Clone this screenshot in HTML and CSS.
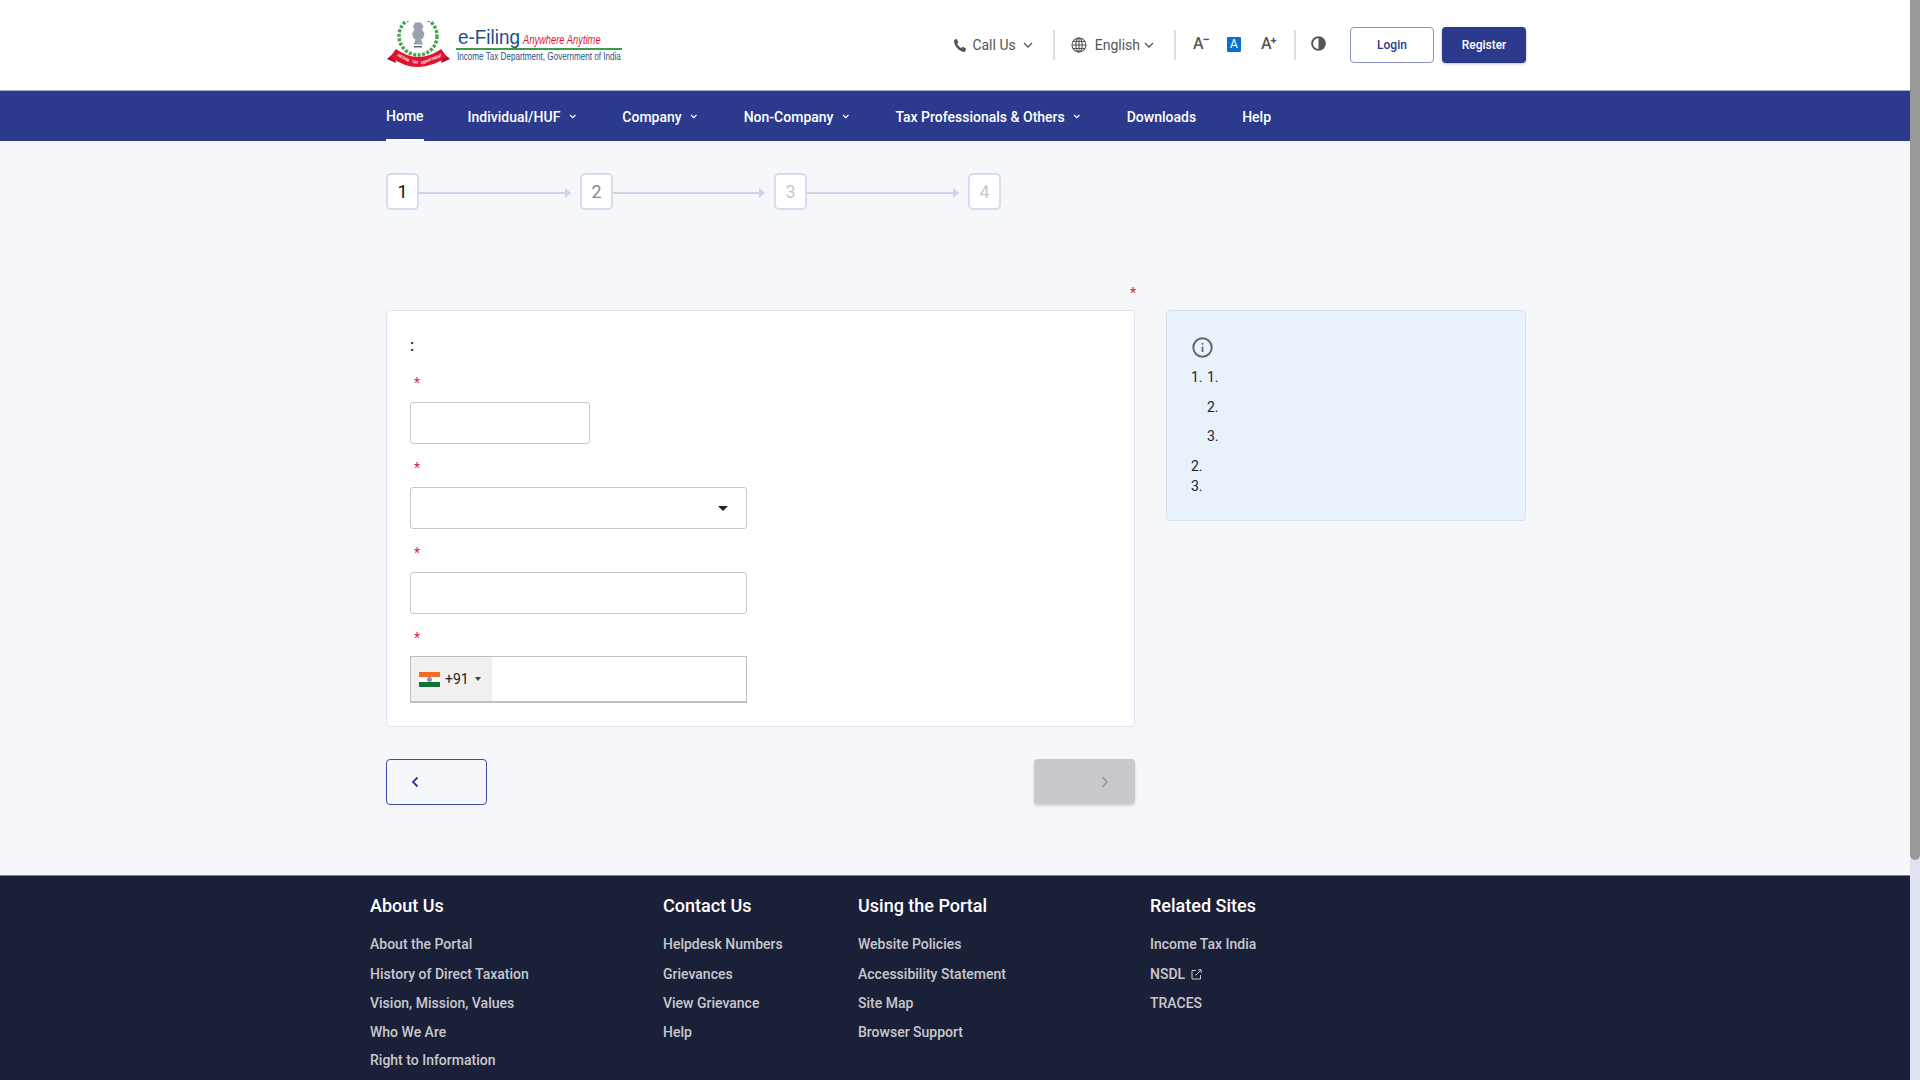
FILE: index.html

```html
<!DOCTYPE html>
<html lang="en">
  <head>
    <meta charset="UTF-8" />
    <meta name="viewport" content="width=device-width, initial-scale=1.0" />
    <title>e-Filing</title>
    <link rel="stylesheet" href="styles.css">
  </head>
  <body>
    <div class="page">
      <!-- Top header -->
      <header class="header">
        <div class="header-inner">
          <svg class="logo" width="238" height="50" viewBox="0 0 238 50">
            <circle cx="32" cy="15" r="19" fill="none" stroke="#4aa356" stroke-width="3.500" stroke-dasharray="3 1.500" />
            <circle cx="32" cy="15" r="17" fill="#fff" />
            <path d="M29 1.500h6l2.500 4-1.500 3 2.500 4-1.500 5-2 1 2 5H27.500l2-5-2-1-1.500-5 2.500-4-1.500-3z" fill="#9aa2af" />
            <path d="M28 25h8v1.500h-8z" fill="#666" />
            <path d="M1 38l7-6 2 10z" fill="#a80f20" />
            <path d="M64 38l-7-6-2 10z" fill="#a80f20" />
            <path d="M7 32Q32 50 58 32" fill="none" stroke="#e0142c" stroke-width="10" />
            <text class="logo-ribbon" transform="translate(17 38) rotate(28) scale(.8 1)" text-anchor="middle">INCOME</text>
            <text class="logo-ribbon" transform="translate(29 42.500) rotate(4) scale(.8 1)" text-anchor="middle">TAX</text>
            <text class="logo-ribbon" transform="translate(46 39.500) rotate(-22) scale(.8 1)" text-anchor="middle">DEPARTMENT</text>
            <text class="logo-title" transform="translate(72 23) scale(.9 1)">e-Filing</text>
            <text class="logo-tag" transform="translate(137 23) scale(.72 1)">Anywhere Anytime</text>
            <rect x="70" y="27" width="166" height="2" fill="#3f9a4a" />
            <text class="logo-sub" transform="translate(71 39) scale(.737 1)">Income Tax Department, Government of India</text>
          </svg>
          <div class="tools">
            <a class="tool tool-call">
              <svg width="16" height="16" viewBox="0 0 24 24"><path d="M6.600 2.500l3.200 5.200-2 2.400c1.300 3 3.400 5.200 6.200 6.400l2.400-2 5 3.300-1.500 3.600c-.4.800-1.200 1.100-2 1C9.800 21 3.500 14 3 6c0-.8.300-1.500 1-2z" fill="#555" /></svg>
              <span>Call Us</span>
              <svg class="chev" width="10" height="6" viewBox="0 0 10 6"><path d="M1 1l4 4 4-4" /></svg>
            </a>
            <i class="sep sep-one"></i>
            <a class="tool tool-lang">
              <svg width="16" height="16" viewBox="0 0 16 16" fill="none" stroke="#555" stroke-width="1.100"><circle cx="8" cy="8" r="7" /><ellipse cx="8" cy="8" rx="3.200" ry="7" /><path d="M8 1v14M1 8h14M2 4.500h12M2 11.500h12" /></svg>
              <span>English</span>
              <svg class="chev" width="10" height="6" viewBox="0 0 10 6"><path d="M1 1l4 4 4-4" /></svg>
            </a>
            <i class="sep sep-two"></i>
            <span class="font-btn">A<sup>&minus;</sup></span>
            <span class="font-box">A</span>
            <span class="font-btn font-plus">A<sup>+</sup></span>
            <i class="sep sep-three"></i>
            <svg class="contrast" width="15" height="15" viewBox="0 0 16 16"><circle cx="8" cy="8" r="6.800" fill="#fff" stroke="#555" stroke-width="2" /><path d="M8 1a7 7 0 0 1 0 14z" fill="#555" /></svg>
            <button class="btn-login">Login</button>
            <button class="btn-register">Register</button>
          </div>
        </div>
      </header>

      <!-- Main nav -->
      <nav class="nav">
        <div class="nav-inner">
          <a class="nav-item active">Home</a>
          <a class="nav-item">Individual/HUF <svg class="nav-chev" width="7.500" height="5" viewBox="0 0 7 5"><path d="M.8 1l2.700 2.700L6.200 1" /></svg></a>
          <a class="nav-item">Company <svg class="nav-chev" width="7.500" height="5" viewBox="0 0 7 5"><path d="M.8 1l2.700 2.700L6.200 1" /></svg></a>
          <a class="nav-item">Non-Company <svg class="nav-chev" width="7.500" height="5" viewBox="0 0 7 5"><path d="M.8 1l2.700 2.700L6.200 1" /></svg></a>
          <a class="nav-item">Tax Professionals &amp; Others <svg class="nav-chev" width="7.500" height="5" viewBox="0 0 7 5"><path d="M.8 1l2.700 2.700L6.200 1" /></svg></a>
          <a class="nav-item">Downloads</a>
          <a class="nav-item">Help</a>
        </div>
      </nav>

      <main class="main">
        <div class="container">
          <!-- Stepper -->
          <div class="steps">
            <div class="step step-current">1</div>
            <div class="step-line"></div>
            <div class="step step-next">2</div>
            <div class="step-line"></div>
            <div class="step">3</div>
            <div class="step-line"></div>
            <div class="step">4</div>
          </div>

          <div class="note-star"><span class="req">*</span></div>

          <div class="content">
            <div class="left">
              <form class="form-card">
                <p class="colon">:</p>
                <div class="field">
                  <label class="req">*</label>
                  <input type="text" class="input input-short" />
                </div>
                <div class="field">
                  <label class="req">*</label>
                  <div class="select-wrap">
                    <select class="input"></select>
                    <i class="select-caret"></i>
                  </div>
                </div>
                <div class="field">
                  <label class="req">*</label>
                  <input type="text" class="input" />
                </div>
                <div class="field field-phone">
                  <label class="req">*</label>
                  <div class="phone">
                    <div class="phone-code">
                      <span class="flag"><i></i></span>
                      <span>+91</span>
                      <i class="phone-caret"></i>
                    </div>
                  </div>
                </div>
              </form>
              <div class="actions">
                <button class="btn-back" type="button">
                  <svg width="8" height="12" viewBox="0 0 8 12"><path d="M6.500 1.500L2 6l4.500 4.500" /></svg>
                </button>
                <button class="btn-next" type="button" disabled>
                  <svg width="8" height="12" viewBox="0 0 8 12"><path d="M1.500 1L6 6l-4.500 5" /></svg>
                </button>
              </div>
            </div>

            <aside class="info-card">
              <svg class="info-icon" width="21" height="21" viewBox="0 0 21 21" fill="none"><circle cx="10.500" cy="10.500" r="9.200" stroke="#666" stroke-width="2" /><path d="M10.500 9.500v5.500M10.500 6v1.700" stroke="#666" stroke-width="1.700" /></svg>
              <ol class="info-list">
                <li>
                  <ol>
                    <li>&nbsp;</li>
                    <li>&nbsp;</li>
                    <li>&nbsp;</li>
                  </ol>
                </li>
                <li>&nbsp;</li>
                <li>&nbsp;</li>
              </ol>
            </aside>
          </div>
        </div>
      </main>

      <!-- Footer -->
      <footer class="footer">
        <div class="footer-inner">
          <div class="footer-col">
            <h4>About Us</h4>
            <a>About the Portal</a>
            <a>History of Direct Taxation</a>
            <a>Vision, Mission, Values</a>
            <a>Who We Are</a>
            <a>Right to Information</a>
          </div>
          <div class="footer-col">
            <h4>Contact Us</h4>
            <a>Helpdesk Numbers</a>
            <a>Grievances</a>
            <a>View Grievance</a>
            <a>Help</a>
          </div>
          <div class="footer-col">
            <h4>Using the Portal</h4>
            <a>Website Policies</a>
            <a>Accessibility Statement</a>
            <a>Site Map</a>
            <a>Browser Support</a>
          </div>
          <div class="footer-col">
            <h4>Related Sites</h4>
            <a>Income Tax India</a>
            <a>NSDL <svg class="ext" width="11" height="11" viewBox="0 0 11 11" fill="none" stroke="#c8c8cc"><path d="M5 1.500H1v8.500h8.500V6M4.500 6.500L10 1M7 .8h3.200V4" /></svg></a>
            <a>TRACES</a>
          </div>
        </div>
      </footer>
    </div>
    <div class="scrollbar"><div class="scrollbar-thumb"></div></div>
  </body>
</html>
```

FILE: styles.css

```css
html,
body {
  margin: 0;
  padding: 0;
  height: 100%;
  overflow: hidden;
}

body {
  display: flex;
  font-family: Roboto, Arial, sans-serif;
  font-size: 14px;
  color: #222;
  background-color: #f5f7fb;
}

.page {
  flex: 1;
  min-width: 0;
  height: 100vh;
  overflow: hidden;
}

/* Page scrollbar */
.scrollbar {
  width: 10px;
  background-color: #dfe2f2;
}

.scrollbar-thumb {
  height: 860px;
  background-color: #999;
  border-radius: 0 0 5px 5px;
}

/* Header styling */
.header {
  height: 90px;
  background-color: #fff;
  border-bottom: 1px solid #a9afd0;
}

.header-inner {
  width: 1142px;
  height: 100%;
  margin: 0 auto;
  padding-left: 2px;
  box-sizing: border-box;
  display: flex;
  align-items: center;
  justify-content: space-between;
}

.logo {
  margin-top: 2px;
}

.logo text {
  font-family: "Liberation Sans", Arial, sans-serif;
}

.logo .logo-ribbon {
  font-size: 4px;
  font-weight: bold;
  fill: #fff;
}

.logo-title {
  font-size: 21px;
  fill: #1d4f86;
}

.logo-tag {
  font-size: 13px;
  font-style: italic;
  fill: #e3162f;
}

.logo-sub {
  font-size: 11px;
  fill: #27527f;
}

.tools {
  display: flex;
  align-items: center;
  color: #555;
}

.tool {
  display: flex;
  align-items: center;
}

.tool-call span {
  margin: 0 7px 0 4px;
}

.tool-lang span {
  margin: 0 4px 0 8px;
}

.chev {
  fill: none;
  stroke: #555;
  stroke-width: 1.3;
}

.sep {
  display: block;
  width: 2px;
  height: 30px;
  background-color: #ddd;
}

.sep-one {
  margin: 0 16px 0 20px;
}

.sep-two {
  margin: 0 17px 0 20px;
}

.sep-three {
  margin: 0 15px 0 17px;
}

.font-btn {
  width: 16px;
  margin-bottom: 2px;
  font-size: 16px;
  font-weight: 500;
  line-height: 20px;
  white-space: nowrap;
}

.font-btn sup {
  font-size: 13px;
  font-weight: 700;
  line-height: 0;
  vertical-align: 5px;
  margin-left: -1px;
}

.font-plus sup {
  font-size: 11px;
}

.font-box {
  width: 14px;
  height: 15px;
  margin: 0 20px 2px 18px;
  background-color: #0b6fd1;
  color: #fff;
  font-size: 12px;
  line-height: 15px;
  text-align: center;
  border-radius: 1px;
}

.contrast {
  margin-bottom: 3px;
}

.btn-login,
.btn-register {
  width: 84px;
  height: 36px;
  margin-top: -1px;
  font-family: inherit;
  font-size: 12px;
  font-weight: 500;
  border-radius: 4px;
  cursor: pointer;
}

.btn-login {
  margin-left: 24px;
  background-color: #fff;
  color: #2b3a8c;
  border: 1px solid #8992c4;
}

.btn-register {
  margin-left: 8px;
  background-color: #2b3a8c;
  color: #fff;
  border: none;
  box-shadow: 0 1px 3px rgba(0, 0, 0, 0.25);
}

/* Nav styling */
.nav {
  height: 50px;
  background-color: #2b3a8c;
}

.nav-inner {
  width: 1142px;
  height: 100%;
  margin: 0 auto;
  padding-left: 2px;
  box-sizing: border-box;
  display: flex;
  gap: 46px;
}

.nav-item {
  display: flex;
  align-items: center;
  gap: 5px;
  padding-top: 1px;
  box-sizing: border-box;
  color: #fff;
  font-weight: 500;
  white-space: pre;
}

.nav-item.active {
  margin-right: -2px;
  border-bottom: 2px solid #fff;
}

.nav-chev {
  fill: none;
  stroke: #fff;
  stroke-width: 1.2;
}

/* Main area */
.main {
  height: 734px;
}

.container {
  width: 1142px;
  margin: 0 auto;
  padding-left: 2px;
  box-sizing: border-box;
}

.steps {
  display: flex;
  align-items: center;
  padding-top: 32px;
}

.step {
  width: 33px;
  height: 37px;
  box-sizing: border-box;
  border: 2px solid #d9dcee;
  border-radius: 5px;
  background-color: #fff;
  color: #c8c8c8;
  font-size: 18px;
  line-height: 33px;
  text-align: center;
}

.step-current {
  color: #111;
}

.step-next {
  color: #888;
}

.step-line {
  position: relative;
  width: 146px;
  height: 2px;
  margin: 2px 15px 0 0;
  background-color: #cfd3e9;
}

.step-line::after {
  content: "";
  position: absolute;
  right: -6px;
  top: -4px;
  border-left: 6px solid #cfd3e9;
  border-top: 5px solid transparent;
  border-bottom: 5px solid transparent;
}

.note-star {
  width: 750px;
  height: 100px;
  box-sizing: border-box;
  text-align: right;
  line-height: 16px;
  padding-top: 75px;
}

.req {
  display: block;
  color: #e0263c;
  font-size: 14px;
  line-height: 16px;
}

.note-star .req {
  display: inline;
}

.content {
  display: flex;
  align-items: flex-start;
  gap: 31px;
}

.left {
  width: 749px;
}

.form-card {
  height: 417px;
  padding: 24px 23px 0;
  box-sizing: border-box;
  background-color: #fff;
  border: 1px solid #e1e4f1;
  border-radius: 4px;
}

.colon {
  margin: 0 0 18px;
  height: 22px;
  line-height: 22px;
  font-size: 16px;
  font-weight: 500;
  color: #1b2039;
}

.field {
  margin-bottom: 16px;
}

.field .req {
  padding-left: 4px;
  margin-bottom: 11px;
}

.field-phone .req {
  margin-bottom: 10px;
}

.input {
  display: block;
  width: 337px;
  height: 42px;
  box-sizing: border-box;
  background-color: #fff;
  border: 1px solid #c8c8c8;
  border-radius: 3px;
  appearance: none;
  outline: none;
}

.input-short {
  width: 180px;
}

.select-wrap {
  position: relative;
  width: 337px;
}

.select-caret {
  position: absolute;
  right: 19px;
  top: 19px;
  border-top: 5px solid #222;
  border-left: 5px solid transparent;
  border-right: 5px solid transparent;
}

.phone {
  width: 337px;
  height: 47px;
  box-sizing: border-box;
  border: 1px solid #c0c0c0;
  border-bottom-width: 2px;
  background-color: #fff;
}

.phone-code {
  width: 81px;
  height: 100%;
  display: flex;
  align-items: center;
  padding-left: 8px;
  box-sizing: border-box;
  background-color: #f1f1f1;
  font-size: 14px;
}

.flag {
  position: relative;
  width: 21px;
  height: 15px;
  margin-right: 5px;
  background: linear-gradient(#f4692a 33%, #fff 33%, #fff 66%, #13713a 66%);
}

.flag i {
  position: absolute;
  left: 8px;
  top: 5px;
  width: 5px;
  height: 5px;
  border-radius: 50%;
  background-color: #8b8fc0;
}

.phone-caret {
  margin-left: 6px;
  border-top: 4px solid #444;
  border-left: 3px solid transparent;
  border-right: 3px solid transparent;
}

.actions {
  display: flex;
  justify-content: space-between;
  margin-top: 32px;
}

.btn-back,
.btn-next {
  width: 101px;
  height: 46px;
  padding: 0 0 0 24px;
  display: flex;
  align-items: center;
  border-radius: 4px;
  box-sizing: border-box;
}

.btn-back {
  background-color: transparent;
  border: 1px solid #3f4ea0;
}

.btn-back svg {
  fill: none;
  stroke: #2b3a8c;
  stroke-width: 1.8;
}

.btn-next {
  height: 45px;
  padding-left: 67px;
  background-color: #c9c8cc;
  border: none;
  box-shadow: 0 2px 3px rgba(0, 0, 0, 0.15);
}

.btn-next svg {
  fill: none;
  stroke: #8f8f93;
  stroke-width: 1.2;
}

.info-card {
  width: 360px;
  height: 211px;
  padding: 26px 24px 0;
  box-sizing: border-box;
  background-color: #e9f1fb;
  border: 1px solid #d6e0f0;
  border-radius: 4px;
}

.info-icon {
  display: block;
  margin: 0 0 9px 1px;
}

.info-list,
.info-list ol {
  margin: 0;
  padding-left: 16px;
  line-height: 20px;
}

.info-list {
  margin-left: -1px;
}

.info-list ol li {
  margin-bottom: 9.500px;
}

/* Footer styling */
.footer {
  height: 481px;
  box-sizing: border-box;
  background-color: #1b2039;
  border-top: 1px solid #7d8090;
}

.footer-inner {
  width: 1170px;
  margin: 0 auto;
  padding-top: 19px;
  display: grid;
  grid-template-columns: 293px 195px 292px 1fr;
}

.footer-col h4 {
  margin: 0 0 18px;
  font-size: 18px;
  font-weight: 500;
  line-height: 22px;
  color: #fff;
}

.footer-col a {
  display: block;
  margin-bottom: 11px;
  font-weight: 500;
  line-height: 18px;
  color: #c8c8cc;
}

.footer-col a:first-of-type {
  margin-bottom: 12px;
}

.footer-col a:nth-of-type(4) {
  margin-bottom: 10px;
}

.ext {
  margin-left: 2px;
  vertical-align: -1px;
}
```
